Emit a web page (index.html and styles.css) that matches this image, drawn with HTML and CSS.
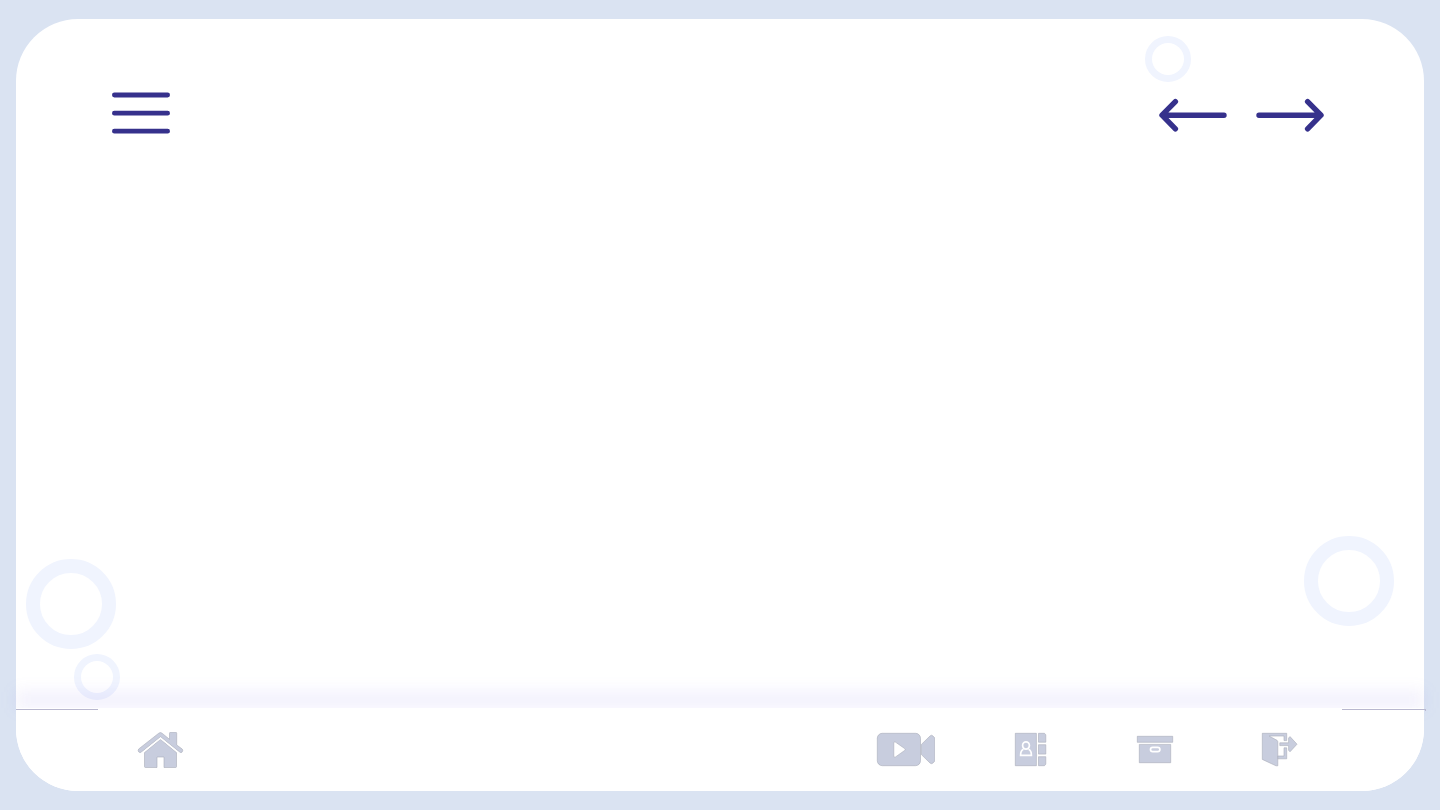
FILE: index.html
```html
<!DOCTYPE html>
<html lang="en">
<head>
<meta charset="utf-8">
<meta name="viewport" content="width=device-width, initial-scale=1">
<title>Home</title>
<link rel="stylesheet" href="styles.css">
</head>
<body>
<div class="panel">
  <span class="ring ring-small ring-top"></span>
  <span class="ring ring-large ring-left"></span>
  <span class="ring ring-small ring-corner"></span>
  <span class="ring ring-large ring-right"></span>

  <header class="topbar">
    <button class="icon-button" type="button" aria-label="Menu">
      <svg class="line-icon" width="58" height="44" viewBox="0 0 58 44"><path stroke-width="4.8" d="M2.4 3H55.6M2.4 21.2H55.6M2.4 39.2H55.6"/></svg>
    </button>
    <div class="arrows">
      <button class="icon-button" type="button" aria-label="Back">
        <svg class="line-icon" width="68" height="44" viewBox="0 0 68 44"><path stroke-width="5.4" d="M65 23.2H3.4M16.4 9.6L3 23.2L16.4 36.8"/></svg>
      </button>
      <button class="icon-button" type="button" aria-label="Forward">
        <svg class="line-icon" width="68" height="44" viewBox="0 0 68 44"><path stroke-width="5.4" d="M3 23.2H64.6M51.6 9.6L65 23.2L51.6 36.8"/></svg>
      </button>
    </div>
  </header>

  <main class="content"></main>

  <footer class="dock">
    <nav class="dock-nav" aria-label="Main">
      <a class="dock-link" href="#home" aria-label="Home">
        <svg class="fill-icon" width="60" height="36" viewBox="0 0 60 36">
          <path d="M30.5 7.4L14.5 20.6V34.5Q14.5 35.5 15.5 35.5H27V25H34V35.5H45.5Q46.5 35.5 46.5 34.5V20.6Z"/>
          <path d="M8.7 17L28.8 1.2Q30.4 -.2 32 1.2L39.5 7.3V1.3Q39.5 .3 40.5 .3H45.7Q46.7 .3 46.7 1.3V13L52.2 17Q53.4 18.7 52 20.2Q51 21 49.8 20.2L30.5 4.8L11.2 20.2Q9.8 21 8.8 20Q7.6 18.4 8.7 17Z"/>
          <path class="gap" d="M11.4 21.6L30.5 6L49.6 21.6"/>
        </svg>
      </a>
      <a class="dock-link dock-link-push" href="#video" aria-label="Videos">
        <svg class="fill-icon" width="60" height="36" viewBox="0 0 60 36">
          <rect x="2.3" y="1.3" width="43.2" height="32.4" rx="5"/>
          <path d="M46.4 12.4L55 4Q56.5 2.5 58 4L59.8 6V29L58 31Q56.5 32.3 55 31L46.4 22.6Z"/>
          <path class="cutout" d="M18.8 11Q18.8 9 20.6 10.2L29.6 16.5Q30.8 17.5 29.6 18.5L20.6 24.9Q18.8 26 18.8 24Z"/>
        </svg>
      </a>
      <a class="dock-link" href="#contacts" aria-label="Contacts">
        <svg class="fill-icon" width="60" height="36" viewBox="0 0 60 36">
          <path d="M15.3 1.3H36.4V33.7H15.3ZM38.5 1.3H44.5L45.8 2.8V10.2H38.5ZM38.5 12.7H45.8V22.1H38.5ZM38.5 24.7H45.8V32.2L44.5 33.7H38.5Z"/>
          <path class="outline" d="M26 9.9A3.4 3.6 0 0 1 26 17.1A3.4 3.6 0 0 1 26 9.9ZM23.4 17.3Q20.6 18.5 20.6 23.3H31.4Q31.4 18.5 28.6 17.3"/>
        </svg>
      </a>
      <a class="dock-link" href="#archive" aria-label="Archive">
        <svg class="fill-icon" width="60" height="36" viewBox="0 0 60 36">
          <path d="M12.3 4.3H47.7V10.3H12.3ZM14.3 12.4H45.7V30.7H14.3Z"/>
          <rect class="outline" x="25.5" y="15.3" width="9.4" height="4.4" rx="2.2"/>
        </svg>
      </a>
      <a class="dock-link" href="#exit" aria-label="Exit">
        <svg class="fill-icon" width="60" height="36" viewBox="0 0 60 36">
          <path d="M12.3 1.3H36.7V8.6H34V4H19L27 8.3Q27.8 8.8 27.8 9.8V33.8H26L12.3 27.4Z"/>
          <path d="M27.8 24H34V15.8H36.7V26.8H27.8Z"/>
          <path d="M29.8 10.8H38.6V6L40 4.6L47 12.2L40 19.8L38.6 18.3V13.6H29.8Z"/>
        </svg>
      </a>
    </nav>
  </footer>
</div>
</body>
</html>
```
FILE: styles.css
```css
* {
  box-sizing: border-box;
}

body {
  margin: 0;
  min-height: 100vh;
  padding: 19px 16px;
  display: flex;
  background: #dae3f2;
  font-family: "Liberation Sans", Arial, sans-serif;
}

.panel {
  position: relative;
  isolation: isolate;
  flex: 1;
  display: flex;
  flex-direction: column;
  background: #fff;
  border-radius: 62px;
}

.topbar {
  display: flex;
  justify-content: space-between;
  padding: 73px 100px 0 96px;
}

.arrows {
  display: flex;
  gap: 29px;
}

.icon-button {
  display: block;
  padding: 0;
  border: 0;
  background: none;
  cursor: pointer;
}

.line-icon,
.fill-icon {
  display: block;
}

.line-icon {
  fill: none;
  stroke: #36318c;
  stroke-linecap: round;
  stroke-linejoin: round;
}

.fill-icon {
  fill: #c8cdde;
  stroke: #a9acb8;
  stroke-width: 0.6;
}

.fill-icon .cutout {
  fill: #fff;
}

.fill-icon .outline,
.fill-icon .gap {
  fill: none;
  stroke: #fff;
  stroke-width: 1.7;
}

.fill-icon .gap {
  stroke-width: 1.3;
}

.content {
  flex: 1;
}

.dock {
  position: relative;
}

/* Soft glow above the dock */
.dock::before {
  content: "";
  position: absolute;
  z-index: -1;
  inset: -16px 0 auto;
  height: 16px;
  background: rgba(120, 100, 230, 0.1);
  filter: blur(8px);
}

/* Short rules at both ends of the dock */
.dock::after {
  content: "";
  position: absolute;
  top: 1px;
  left: 0;
  right: -2px;
  height: 2px;
  background: linear-gradient(#b9b8cf, #b9b8cf) left top / 82px 1px no-repeat,
    linear-gradient(#b9b8cf, #b9b8cf) right top / 84px 1px no-repeat,
    linear-gradient(#b9b8cf, #b9b8cf) right top / 1px 2px no-repeat;
}

.dock-nav {
  display: flex;
  gap: 65px;
  padding: 24px 114px 23px;
  background: #fff;
  border-radius: 0 0 62px 62px;
}

.dock-link {
  display: block;
}

.dock-link-push {
  margin-left: auto;
}

.ring {
  position: absolute;
  z-index: -2;
  border: solid #f0f4fe;
  border-radius: 50%;
}

.ring-small {
  width: 46px;
  height: 46px;
  border-width: 7px;
}

.ring-large {
  width: 90px;
  height: 90px;
  border-width: 14px;
}

.ring-top {
  top: 17px;
  right: 233px;
}

.ring-left {
  bottom: 142px;
  left: 10px;
}

.ring-corner {
  bottom: 91px;
  left: 58px;
}

.ring-right {
  right: 30px;
  bottom: 165px;
}
```
